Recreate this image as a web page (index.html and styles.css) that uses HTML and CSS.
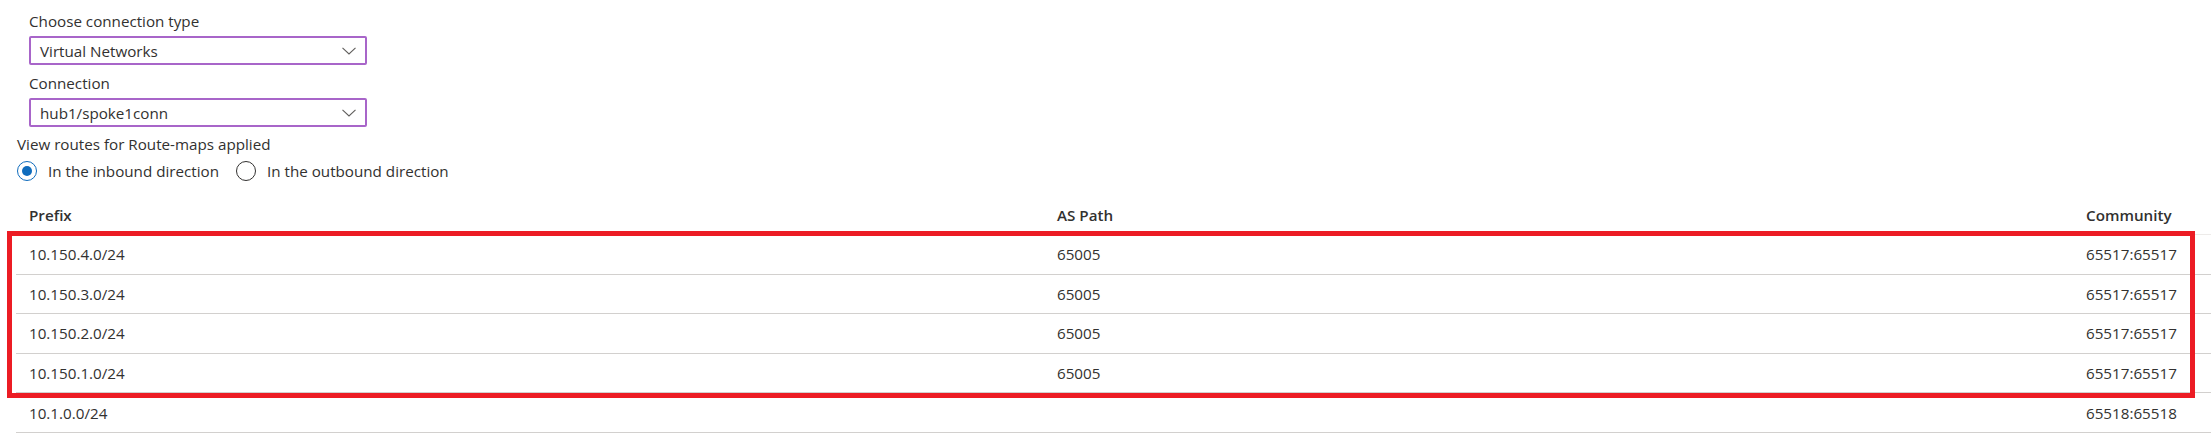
FILE: index.html
```html
<!DOCTYPE html>
<html lang="en">
<head>
<meta charset="utf-8">
<title>Route-maps routes</title>
<link rel="stylesheet" href="styles.css">
</head>
<body>
<div class="page">
  <div class="fields">
    <div class="field">
      <div class="label">Choose connection type</div>
      <div class="dropdown">
        <span class="dd-text">Virtual Networks</span>
        <svg class="chev" width="14" height="8" viewBox="0 0 14 8"><path d="M0.5 0.8 L7 7 L13.5 0.8" fill="none" stroke="#605e5c" stroke-width="1.1"/></svg>
      </div>
    </div>
    <div class="field field2">
      <div class="label">Connection</div>
      <div class="dropdown">
        <span class="dd-text">hub1/spoke1conn</span>
        <svg class="chev" width="14" height="8" viewBox="0 0 14 8"><path d="M0.5 0.8 L7 7 L13.5 0.8" fill="none" stroke="#605e5c" stroke-width="1.1"/></svg>
      </div>
    </div>
  </div>
  <div class="view-label">View routes for Route-maps applied</div>
  <div class="radios">
    <label class="radio"><span class="circle checked"><span class="dot"></span></span><span>In the inbound direction</span></label>
    <label class="radio"><span class="circle"></span><span>In the outbound direction</span></label>
  </div>
  <div class="table-wrap">
    <div class="table">
      <div class="row head">
        <div class="cell">Prefix</div>
        <div class="cell">AS Path</div>
        <div class="cell">Community</div>
      </div>
      <div class="row">
        <div class="cell">10.150.4.0/24</div>
        <div class="cell">65005</div>
        <div class="cell">65517:65517</div>
      </div>
      <div class="row">
        <div class="cell">10.150.3.0/24</div>
        <div class="cell">65005</div>
        <div class="cell">65517:65517</div>
      </div>
      <div class="row">
        <div class="cell">10.150.2.0/24</div>
        <div class="cell">65005</div>
        <div class="cell">65517:65517</div>
      </div>
      <div class="row">
        <div class="cell">10.150.1.0/24</div>
        <div class="cell">65005</div>
        <div class="cell">65517:65517</div>
      </div>
      <div class="row">
        <div class="cell">10.1.0.0/24</div>
        <div class="cell"></div>
        <div class="cell">65518:65518</div>
      </div>
    </div>
    <div class="highlight"></div>
  </div>
</div>
</body>
</html>
```

FILE: styles.css
```css
* { box-sizing: border-box; }
html, body {
  margin: 0;
  padding: 0;
  background: #ffffff;
  overflow: hidden;
}
body {
  font-family: "Segoe UI", "Open Sans", "Noto Sans", sans-serif;
  font-size: 15.2px;
  line-height: 20px;
  color: #323130;
  width: 2211px;
  height: 438px;
}
.page {
  padding-top: 11px;
}
.fields {
  padding-left: 29px;
}
.field2 {
  margin-top: 8px;
}
.label {
  height: 20px;
}
.dropdown {
  margin-top: 5px;
  width: 338px;
  height: 29px;
  border: 2px solid #a865c9;
  border-radius: 2px;
  display: flex;
  align-items: center;
  justify-content: space-between;
  padding: 0 9px 0 9px;
}
.dd-text {
  line-height: 20px;
}
.chev {
  display: block;
}
.view-label {
  margin-top: 7px;
  padding-left: 17px;
  height: 20px;
}
.radios {
  margin-top: 5px;
  padding-left: 17px;
  display: flex;
  gap: 17px;
  height: 24px;
  align-items: center;
}
.radio {
  display: flex;
  align-items: center;
  gap: 11px;
}
.circle {
  width: 20px;
  height: 20px;
  border-radius: 50%;
  border: 1.5px solid #323130;
  display: flex;
  align-items: center;
  justify-content: center;
}
.circle.checked {
  border-color: #0f6cbd;
  border-width: 1px;
}
.dot {
  width: 10px;
  height: 10px;
  border-radius: 50%;
  background: #0f6cbd;
}
.table-wrap {
  position: relative;
  margin-top: 12px;
  padding-left: 16px;
}
.table {
  display: flex;
  flex-direction: column;
}
.row {
  display: grid;
  grid-template-columns: 1028px 1029px 1fr;
  height: 39.6px;
  align-items: center;
  border-bottom: 1px solid #d2d0ce;
}
.row.head {
  height: 40px;
  font-weight: 600;
  border-bottom: 1px solid #edebe9;
}
.cell {
  padding-left: 13px;
  white-space: nowrap;
}
.highlight {
  position: absolute;
  left: 7px;
  top: 36px;
  width: 2188px;
  height: 167px;
  border: 5px solid #ec1c24;
  pointer-events: none;
}
```
